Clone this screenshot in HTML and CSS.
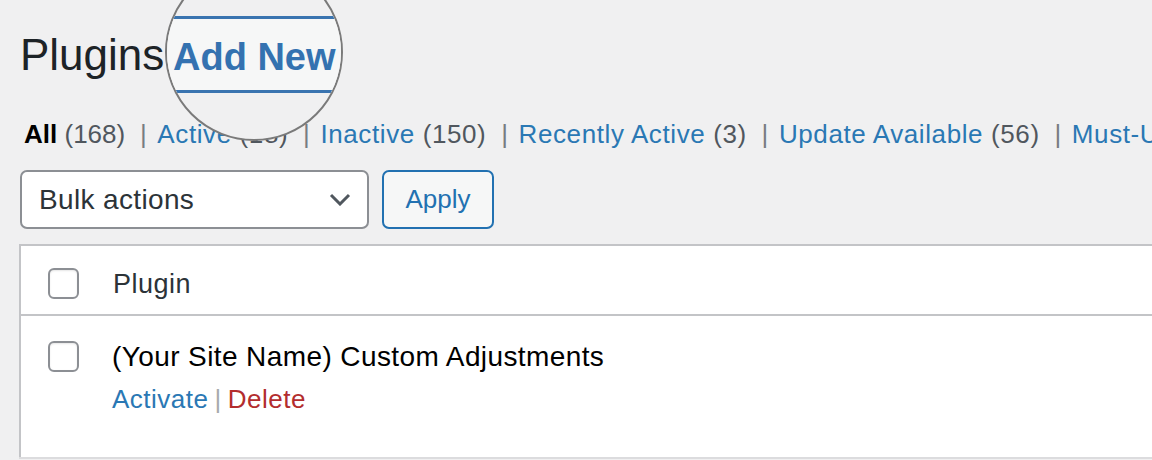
FILE: index.html
```
<!DOCTYPE html>
<html>
<head>
  <title>Plugins</title>
  <link rel="stylesheet" href="styles.css">
</head>
<body>
  <div class="wrap">
    <h1 class="page-title">Plugins</h1>

    <div class="lens">
      <div class="lens-band">Add New</div>
    </div>

    <ul class="subsubsub">
      <li class="all"><b class="current">All</b> <span class="count">(168)</span></li>
      <li><a href="#">Active</a> <span class="count">(18)</span></li>
      <li><a href="#">Inactive</a> <span class="count">(150)</span></li>
      <li><a href="#">Recently Active</a> <span class="count">(3)</span></li>
      <li><a href="#">Update Available</a> <span class="count">(56)</span></li>
      <li><a href="#">Must-Use</a> <span class="count">(2)</span></li>
    </ul>

    <div class="tablenav">
      <div class="select">
        <span>Bulk actions</span>
        <svg width="22" height="13" viewBox="0 0 22 13"><path d="M2 2 L11 11 L20 2" fill="none" stroke="#50575e" stroke-width="3"/></svg>
      </div>
      <button class="button">Apply</button>
    </div>

    <table class="plugins">
      <thead>
        <tr>
          <th class="cb"><span class="checkbox"></span></th>
          <th class="name">Plugin</th>
        </tr>
      </thead>
      <tbody>
        <tr>
          <td class="cb"><span class="checkbox"></span></td>
          <td class="name">
            <div class="plugin-title">(Your Site Name) Custom Adjustments</div>
            <div class="row-actions"><a href="#">Activate</a><span class="sep">|</span><a href="#" class="delete">Delete</a></div>
          </td>
        </tr>
      </tbody>
    </table>
  </div>
</body>
</html>
```

FILE: styles.css
```
html { overflow: hidden; }
body {
  margin: 0;
  background: #f0f0f1;
  color: #2c3338;
  font-family: "Liberation Sans", Arial, sans-serif;
}
a { text-decoration: none; color: #2a78b4; }

.wrap {
  position: relative;
  padding: 27px 0 0 20px;
}
.page-title {
  margin: 0;
  font-size: 44px;
  font-weight: 400;
  line-height: 56px;
  color: #1d2327;
}

/* magnifier over the Add New button */
.lens {
  position: absolute;
  left: 165px;
  top: -37px;
  width: 178px;
  height: 178px;
  box-sizing: border-box;
  border: 2px solid #7a7a7a;
  border-radius: 50%;
  background: #f0f0f1;
  overflow: hidden;
}
.lens-band {
  margin-top: 51px;
  height: 77px;
  box-sizing: border-box;
  border-top: 3px solid #3a74b0;
  border-bottom: 3px solid #3a74b0;
  background: #f6f7f7;
  padding: 15px 0 0 6px;
  font-size: 38px;
  line-height: 46px;
  font-weight: 700;
  color: #3472b0;
  white-space: nowrap;
}

.subsubsub {
  list-style: none;
  margin: 35px 0 0;
  padding: 0 0 0 4px;
  font-size: 26px;
  line-height: 32px;
  letter-spacing: 0.6px;
  white-space: nowrap;
}
.subsubsub li { display: inline; }
.subsubsub li.all { letter-spacing: 0; }
.subsubsub li + li::before {
  content: "|";
  color: #787c82;
  margin: 0 10px 0 7px;
}
.subsubsub .current { color: #000; }
.subsubsub .count { color: #50575e; }

.tablenav {
  display: flex;
  gap: 13px;
  margin-top: 20px;
}
.select {
  width: 349px;
  height: 59px;
  box-sizing: border-box;
  display: flex;
  align-items: center;
  justify-content: space-between;
  padding: 0 16px 0 17px;
  background: #fff;
  border: 2px solid #8c8f94;
  border-radius: 7px;
  font-size: 28px;
  letter-spacing: 0.35px;
  color: #2c3338;
}
.button {
  width: 112px;
  height: 59px;
  background: #f6f7f7;
  border: 2px solid #2271b1;
  border-radius: 7px;
  font-family: inherit;
  font-size: 26px;
  color: #2271b1;
  padding: 0;
}

.plugins {
  margin: 15px 0 0 -1px;
  width: 1200px;
  border-collapse: collapse;
  background: #fff;
  border: 2px solid #c3c4c7;
  border-bottom-color: #dcdcde;
  font-size: 26px;
  line-height: 32px;
}
.plugins th, .plugins td {
  vertical-align: top;
  text-align: left;
  padding: 0;
}
.plugins thead th {
  padding-top: 22px;
  padding-bottom: 14px;
  border-bottom: 2px solid #c3c4c7;
  font-weight: 400;
  color: #2c3338;
}
.plugins thead .name {
  font-size: 27px;
  letter-spacing: 0.5px;
  padding-left: 2px;
}
.plugins tbody td {
  padding-top: 25px;
  padding-bottom: 42px;
}
.plugins .cb {
  width: 91px;
  padding-left: 27px;
  box-sizing: border-box;
}
.checkbox {
  display: block;
  width: 31px;
  height: 31px;
  box-sizing: border-box;
  border: 2px solid #8c8f94;
  border-radius: 6px;
  background: #fff;
  box-shadow: inset 0 1px 2px rgba(0,0,0,.1);
}
.plugin-title {
  color: #000;
  font-size: 28px;
  letter-spacing: 0.4px;
  padding-left: 1px;
}
.row-actions {
  margin-top: 10px;
  letter-spacing: 0.5px;
  padding-left: 1px;
}
.row-actions .sep {
  color: #a7aaad;
  margin: 0 6px;
}
.row-actions .delete { color: #b32d2e; }
```
